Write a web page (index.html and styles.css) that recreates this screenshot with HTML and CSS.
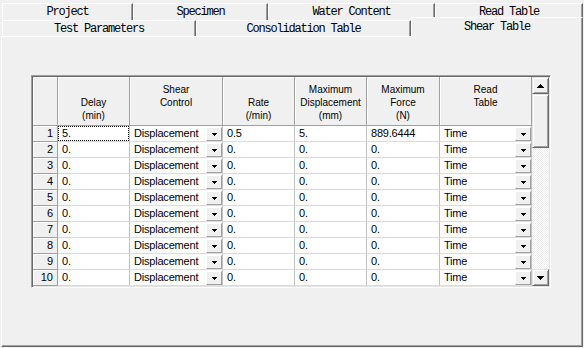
FILE: index.html
```html
<!doctype html>
<html>
<head>
    <meta charset="utf-8">
    <title>Shear Table</title>
    <link rel="stylesheet" href="styles.css">
</head>
<body>
<div class="tabctl">
    <div class="tabrow back">
        <div class="tab t-project">Project</div>
        <div class="tab t-specimen">Specimen</div>
        <div class="tab t-water">Water Content</div>
        <div class="tab t-read">Read Table</div>
    </div>
    <div class="tabrow front">
        <div class="tab t-test">Test Parameters</div>
        <div class="tab t-consol">Consolidation Table</div>
        <div class="tab sel t-shear">Shear Table</div>
    </div>

    <div class="panel">
        <div class="gridframe">
            <div class="grid">
                <!-- header -->
                <div class="hd"></div>
                <div class="hd"><span></span><span>Delay</span><span>(min)</span></div>
                <div class="hd"><span>Shear</span><span>Control</span><span></span></div>
                <div class="hd"><span></span><span>Rate</span><span>(/min)</span></div>
                <div class="hd"><span>Maximum</span><span>Displacement</span><span>(mm)</span></div>
                <div class="hd"><span>Maximum</span><span>Force</span><span>(N)</span></div>
                <div class="hd"><span>Read</span><span>Table</span><span></span></div>

                <div class="rn">1</div>
                <div class="c"><div class="focus">5.</div></div>
                <div class="c combo"><span>Displacement</span><b class="dd"><i class="arr"></i></b></div>
                <div class="c">0.5</div>
                <div class="c">5.</div>
                <div class="c">889.6444</div>
                <div class="c combo"><span>Time</span><b class="dd"><i class="arr"></i></b></div>

                <div class="rn">2</div>
                <div class="c">0.</div>
                <div class="c combo"><span>Displacement</span><b class="dd"><i class="arr"></i></b></div>
                <div class="c">0.</div>
                <div class="c">0.</div>
                <div class="c">0.</div>
                <div class="c combo"><span>Time</span><b class="dd"><i class="arr"></i></b></div>

                <div class="rn">3</div>
                <div class="c">0.</div>
                <div class="c combo"><span>Displacement</span><b class="dd"><i class="arr"></i></b></div>
                <div class="c">0.</div>
                <div class="c">0.</div>
                <div class="c">0.</div>
                <div class="c combo"><span>Time</span><b class="dd"><i class="arr"></i></b></div>

                <div class="rn">4</div>
                <div class="c">0.</div>
                <div class="c combo"><span>Displacement</span><b class="dd"><i class="arr"></i></b></div>
                <div class="c">0.</div>
                <div class="c">0.</div>
                <div class="c">0.</div>
                <div class="c combo"><span>Time</span><b class="dd"><i class="arr"></i></b></div>

                <div class="rn">5</div>
                <div class="c">0.</div>
                <div class="c combo"><span>Displacement</span><b class="dd"><i class="arr"></i></b></div>
                <div class="c">0.</div>
                <div class="c">0.</div>
                <div class="c">0.</div>
                <div class="c combo"><span>Time</span><b class="dd"><i class="arr"></i></b></div>

                <div class="rn">6</div>
                <div class="c">0.</div>
                <div class="c combo"><span>Displacement</span><b class="dd"><i class="arr"></i></b></div>
                <div class="c">0.</div>
                <div class="c">0.</div>
                <div class="c">0.</div>
                <div class="c combo"><span>Time</span><b class="dd"><i class="arr"></i></b></div>

                <div class="rn">7</div>
                <div class="c">0.</div>
                <div class="c combo"><span>Displacement</span><b class="dd"><i class="arr"></i></b></div>
                <div class="c">0.</div>
                <div class="c">0.</div>
                <div class="c">0.</div>
                <div class="c combo"><span>Time</span><b class="dd"><i class="arr"></i></b></div>

                <div class="rn">8</div>
                <div class="c">0.</div>
                <div class="c combo"><span>Displacement</span><b class="dd"><i class="arr"></i></b></div>
                <div class="c">0.</div>
                <div class="c">0.</div>
                <div class="c">0.</div>
                <div class="c combo"><span>Time</span><b class="dd"><i class="arr"></i></b></div>

                <div class="rn">9</div>
                <div class="c">0.</div>
                <div class="c combo"><span>Displacement</span><b class="dd"><i class="arr"></i></b></div>
                <div class="c">0.</div>
                <div class="c">0.</div>
                <div class="c">0.</div>
                <div class="c combo"><span>Time</span><b class="dd"><i class="arr"></i></b></div>

                <div class="rn">10</div>
                <div class="c">0.</div>
                <div class="c combo"><span>Displacement</span><b class="dd"><i class="arr"></i></b></div>
                <div class="c">0.</div>
                <div class="c">0.</div>
                <div class="c">0.</div>
                <div class="c combo"><span>Time</span><b class="dd"><i class="arr"></i></b></div>
            </div>

            <div class="vscroll">
                <div class="sbtn"><i class="arr-up"></i></div>
                <div class="sbtn thumb"></div>
                <div class="track"></div>
                <div class="sbtn"><i class="arr-dn"></i></div>
            </div>
        </div>
    </div>
</div>
</body>
</html>
```

FILE: styles.css
```css
body{
    margin:0;
    width:584px;
    height:348px;
    overflow:hidden;
    background-color:#f0f0f0;
    color:#000;
    font-family:"Liberation Sans", Arial, sans-serif;
}
.tabctl{
    padding-top:3px;
}

/* tabs */
.tabrow{
    display:flex;
    padding-left:2px;
}
.tab{
    box-sizing:border-box;
    height:17px;
    border-top:1px solid #fff;
    border-left:1px solid #fff;
    border-right:1px solid #696969;
    box-shadow:inset -1px 0 #a0a0a0;
    background-color:#f0f0f0;
    font:12px/16px "Liberation Mono", monospace;
    letter-spacing:-1.2px;
    text-align:center;
    white-space:nowrap;
}
.t-project{ width:131px; }
.t-specimen{ width:135px; }
.t-water{ width:167px; }
.t-read{ width:148px; }
.t-test{ width:194px; }
.t-consol{ width:215px; }
.t-shear{ width:172px; }

.front{
    height:16px;
    align-items:flex-end;
}
.front .tab{
    height:16px;
}
.front .sel{
    height:20px;
    margin-bottom:-1px;
    padding-top:1px;
    position:relative;
    z-index:1;
}

/* page of the tab control */
.panel{
    box-sizing:border-box;
    width:582px;
    height:311px;
    margin-left:1px;
    border:1px solid;
    border-color:#fff #696969 #696969 #fff;
    box-shadow:inset -1px -1px #a0a0a0;
    padding:38px 0 0 29px;
}

/* grid */
.gridframe{
    display:flex;
    width:max-content;
    border:1px solid;
    border-color:#a0a0a0 #fff #fff #a0a0a0;
    padding:1px;
    box-shadow:inset 1px 1px #696969, inset -1px -1px #e3e3e3;
}
.grid{
    display:grid;
    grid-template-columns:25px 72px 93px 72px 72px 73px 92px;
    grid-template-rows:49px repeat(10, 16px);
}
.hd{
    box-sizing:border-box;
    background-color:#f0f0f0;
    border-right:1px solid #a0a0a0;
    border-bottom:1px solid #a0a0a0;
    box-shadow:inset 1px 1px #fff;
    display:flex;
    flex-direction:column;
    justify-content:center;
    padding-top:2px;
    font-size:10px;
    line-height:13px;
    text-align:center;
    white-space:nowrap;
}
.hd span{
    display:block;
    height:13px;
}
.rn{
    box-sizing:border-box;
    background-color:#f0f0f0;
    border-right:1px solid #a0a0a0;
    border-bottom:1px solid #a0a0a0;
    box-shadow:inset 1px 1px #fff;
    padding-right:4px;
    text-align:right;
    font-size:11px;
    line-height:15px;
}
.c{
    box-sizing:border-box;
    background-color:#fff;
    border-right:1px solid #c0c0c0;
    border-bottom:1px solid #dcdcdc;
    padding-left:4px;
    font-size:11px;
    letter-spacing:-0.2px;
    line-height:15px;
    white-space:nowrap;
    overflow:hidden;
}
.c:has(.focus){
    padding-left:0;
}
.focus{
    box-sizing:border-box;
    height:15px;
    border:1px dotted #000;
    padding-left:3px;
    line-height:13px;
}
.combo{
    display:flex;
    justify-content:space-between;
    align-items:flex-end;
}
.combo span{
    align-self:flex-start;
}
.dd{
    box-sizing:border-box;
    width:16px;
    height:14px;
    background-color:#f0f0f0;
    border:1px solid;
    border-color:#fff #a0a0a0 #a0a0a0 #fff;
    display:flex;
    align-items:center;
    justify-content:center;
}
.arr{
    width:5px;
    height:3px;
    background:
        linear-gradient(#000,#000) 0 0/5px 1px no-repeat,
        linear-gradient(#000,#000) 1px 1px/3px 1px no-repeat,
        linear-gradient(#000,#000) 2px 2px/1px 1px no-repeat;
}

/* scrollbar */
.vscroll{
    width:17px;
    display:flex;
    flex-direction:column;
}
.sbtn{
    box-sizing:border-box;
    height:17px;
    background-color:#f0f0f0;
    border:1px solid;
    border-color:#e3e3e3 #696969 #696969 #e3e3e3;
    box-shadow:inset 1px 1px #fff, inset -1px -1px #a0a0a0;
    display:flex;
    align-items:center;
    justify-content:center;
}
.thumb{
    height:54px;
}
.track{
    flex:1;
    background:repeating-conic-gradient(#fff 0 25%, #ececec 0 50%) 0 0/2px 2px;
}
.arr-up, .arr-dn{
    width:7px;
    height:4px;
}
.arr-up{
    background:
        linear-gradient(#000,#000) 3px 0/1px 1px no-repeat,
        linear-gradient(#000,#000) 2px 1px/3px 1px no-repeat,
        linear-gradient(#000,#000) 1px 2px/5px 1px no-repeat,
        linear-gradient(#000,#000) 0 3px/7px 1px no-repeat;
}
.arr-dn{
    background:
        linear-gradient(#000,#000) 0 0/7px 1px no-repeat,
        linear-gradient(#000,#000) 1px 1px/5px 1px no-repeat,
        linear-gradient(#000,#000) 2px 2px/3px 1px no-repeat,
        linear-gradient(#000,#000) 3px 3px/1px 1px no-repeat;
}
```
